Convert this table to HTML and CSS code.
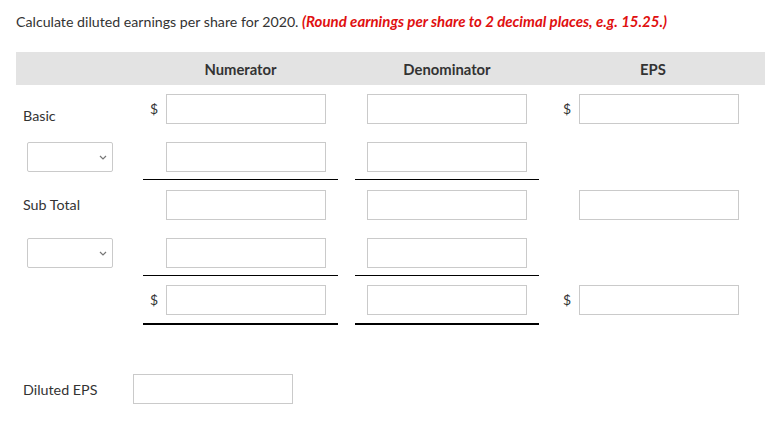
FILE: index.html
```html
<!DOCTYPE html>
<html>
<head>
<meta charset="utf-8">
<link rel="stylesheet" href="styles.css">
</head>
<body>
<div class="page">
  <p class="title">Calculate diluted earnings per share for 2020. <span class="hint">(Round earnings per share to 2 decimal places, e.g. 15.25.)</span></p>

  <div class="grid head">
    <div></div>
    <div class="hcell">Numerator</div>
    <div></div>
    <div class="hcell">Denominator</div>
    <div></div>
    <div class="hcell">EPS</div>
    <div></div>
  </div>

  <div class="grid row r1">
    <div class="label low">Basic</div>
    <div class="cell num"><span class="dollar">$</span><span class="box"></span></div>
    <div></div>
    <div class="cell den"><span class="box"></span></div>
    <div></div>
    <div class="cell eps"><span class="dollar">$</span><span class="box"></span></div>
    <div></div>
  </div>

  <div class="grid row r2">
    <div class="label"><span class="sel"><svg width="8" height="5" viewBox="0 0 8 5"><path d="M1 1 L4 4 L7 1" fill="none" stroke="#777" stroke-width="1.2"/></svg></span></div>
    <div class="cell num line"><span class="dollar"></span><span class="box"></span></div>
    <div></div>
    <div class="cell den line"><span class="box"></span></div>
    <div></div>
    <div class="cell eps"></div>
    <div></div>
  </div>

  <div class="grid row r3">
    <div class="label mid">Sub Total</div>
    <div class="cell num"><span class="dollar"></span><span class="box"></span></div>
    <div></div>
    <div class="cell den"><span class="box"></span></div>
    <div></div>
    <div class="cell eps"><span class="dollar"></span><span class="box"></span></div>
    <div></div>
  </div>

  <div class="grid row r4">
    <div class="label"><span class="sel"><svg width="8" height="5" viewBox="0 0 8 5"><path d="M1 1 L4 4 L7 1" fill="none" stroke="#777" stroke-width="1.2"/></svg></span></div>
    <div class="cell num line"><span class="dollar"></span><span class="box"></span></div>
    <div></div>
    <div class="cell den line"><span class="box"></span></div>
    <div></div>
    <div class="cell eps"></div>
    <div></div>
  </div>

  <div class="grid row r5">
    <div class="label"></div>
    <div class="cell num thick"><span class="dollar">$</span><span class="box"></span></div>
    <div></div>
    <div class="cell den thick"><span class="box"></span></div>
    <div></div>
    <div class="cell eps"><span class="dollar">$</span><span class="box"></span></div>
    <div></div>
  </div>

  <div class="final">
    <div class="flabel">Diluted EPS</div>
    <span class="box"></span>
  </div>
</div>
</body>
</html>
```

FILE: styles.css
```css
* { box-sizing: border-box; }
body {
  margin: 0;
  background: #fff;
  font-family: Lato, "Open Sans", Arial, sans-serif;
  color: #333;
}
.page {
  padding: 12px 17px 0 16px;
}
.title {
  margin: 0;
  height: 20px;
  font-size: 14.2px;
  line-height: 20px;
  color: #333;
}
.hint {
  color: #e01010;
  font-weight: bold;
  font-style: italic;
  font-size: 15px;
  line-height: 1;
}
.grid {
  display: grid;
  grid-template-columns: 127px 195px 17px 184px 12px 204px 10px;
  width: 749px;
}
.head {
  margin-top: 20px;
  height: 33px;
  background: #e3e3e3;
  align-items: center;
}
.hcell {
  text-align: center;
  font-weight: bold;
  font-size: 14.8px;
  color: #333;
}
.row { align-items: start; }
.r1 { margin-top: 9px; }
.r2 { margin-top: 18px; }
.r3 { margin-top: 10px; }
.r4 { margin-top: 18px; }
.r5 { margin-top: 9px; }

.label {
  padding-left: 7px;
  font-size: 14.3px;
  line-height: 16px;
  color: #333;
}
.label.low { padding-top: 14px; }
.label.mid { padding-top: 7px; }

.cell {
  display: flex;
  align-items: flex-start;
}
.cell.num { padding-left: 7px; }
.cell.den { padding-left: 12px; }
.cell.eps { padding-left: 12px; }
.dollar {
  width: 16px;
  font-size: 14px;
  line-height: 16px;
  padding-top: 7px;
  color: #333;
}
.box {
  display: block;
  width: 160px;
  height: 30px;
  border: 1px solid #cacaca;
  background: #fff;
}
.line {
  padding-bottom: 7px;
  border-bottom: 1px solid #000;
}
.thick {
  padding-bottom: 8px;
  border-bottom: 2px solid #000;
}
.sel {
  display: flex;
  align-items: center;
  justify-content: flex-end;
  margin-left: 4px;
  width: 86px;
  height: 30px;
  border: 1px solid #cacaca;
  border-radius: 2px;
  padding-right: 5px;
  background: #fff;
}
.final {
  display: flex;
  align-items: center;
  margin-top: 49px;
}
.flabel {
  width: 117px;
  padding-left: 7px;
  font-size: 14.3px;
  color: #333;
}
```
